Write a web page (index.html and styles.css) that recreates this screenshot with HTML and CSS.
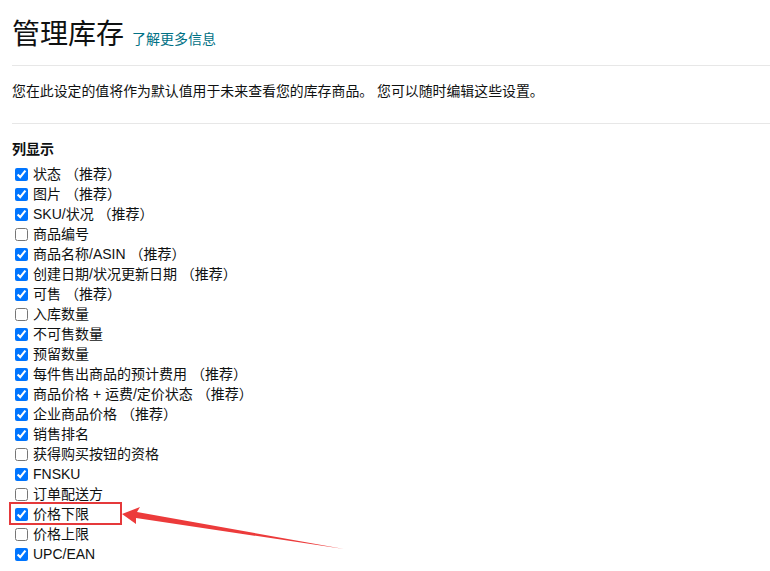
FILE: index.html
```html
<!DOCTYPE html>
<html>
  <head>
    <title>管理库存</title>
    <link rel="stylesheet" href="styles.css">
  </head>
  <body>
    <div class="page">
      <div class="page-header">
        <h1>管理库存</h1>
        <a class="learn-more" href="#">了解更多信息</a>
      </div>
      <hr class="divider">
      <p class="intro">您在此设定的值将作为默认值用于未来查看您的库存商品。 您可以随时编辑这些设置。</p>
      <hr class="divider divider-low">
      <div class="section-title">列显示</div>
      <div class="column-list">
        <label class="col-option"><input type="checkbox" checked><span>状态 （推荐）</span></label>
        <label class="col-option"><input type="checkbox" checked><span>图片 （推荐）</span></label>
        <label class="col-option"><input type="checkbox" checked><span>SKU/状况 （推荐）</span></label>
        <label class="col-option"><input type="checkbox"><span>商品编号</span></label>
        <label class="col-option"><input type="checkbox" checked><span>商品名称/ASIN （推荐）</span></label>
        <label class="col-option"><input type="checkbox" checked><span>创建日期/状况更新日期 （推荐）</span></label>
        <label class="col-option"><input type="checkbox" checked><span>可售 （推荐）</span></label>
        <label class="col-option"><input type="checkbox"><span>入库数量</span></label>
        <label class="col-option"><input type="checkbox" checked><span>不可售数量</span></label>
        <label class="col-option"><input type="checkbox" checked><span>预留数量</span></label>
        <label class="col-option"><input type="checkbox" checked><span>每件售出商品的预计费用 （推荐）</span></label>
        <label class="col-option"><input type="checkbox" checked><span>商品价格 + 运费/定价状态 （推荐）</span></label>
        <label class="col-option"><input type="checkbox" checked><span>企业商品价格 （推荐）</span></label>
        <label class="col-option"><input type="checkbox" checked><span>销售排名</span></label>
        <label class="col-option"><input type="checkbox"><span>获得购买按钮的资格</span></label>
        <label class="col-option"><input type="checkbox" checked><span>FNSKU</span></label>
        <label class="col-option"><input type="checkbox"><span>订单配送方</span></label>
        <label class="col-option highlighted"><input type="checkbox" checked><span>价格下限</span><span class="mark-box"></span><svg class="mark-arrow" width="240" height="56" viewBox="0 0 240 56"><polygon points="4,14 22,7 19,12 226,49 18,18 18,24" fill="#ec3b3b"/></svg></label>
        <label class="col-option"><input type="checkbox"><span>价格上限</span></label>
        <label class="col-option"><input type="checkbox" checked><span>UPC/EAN</span></label>
      </div>
    </div>
  </body>
</html>
```

FILE: styles.css
```css
html,
body {
  margin: 0;
  padding: 0;
  background: #fff;
}
body {
  font-family: "Liberation Sans", Arial, "Noto Sans CJK SC", sans-serif;
  color: #0f1111;
  font-size: 14px;
  overflow: hidden;
}
.page {
  padding: 18px 0 0 12px;
}
.page-header {
  display: flex;
  align-items: baseline;
  gap: 8px;
}
h1 {
  margin: 0;
  font-size: 28px;
  line-height: 34px;
  font-weight: 400;
  color: #0f1111;
}
.learn-more {
  font-size: 14px;
  color: #007185;
  text-decoration: none;
}
.divider {
  border: none;
  border-top: 1px solid #e7e7e7;
  margin: 13px 0 0 0;
}
.divider-low {
  margin-top: 22px;
}
.intro {
  margin: 15px 0 0 0;
  line-height: 20px;
  font-size: 13.9px;
}
.section-title {
  margin-top: 15px;
  font-weight: 700;
  line-height: 20px;
}
.column-list {
  margin-top: 5px;
  display: flex;
  flex-direction: column;
}
.col-option {
  display: flex;
  align-items: center;
  height: 20px;
  line-height: 20px;
  white-space: pre;
}
.col-option input {
  width: 13px;
  height: 13px;
  margin: 0 5px 0 3px;
}
.highlighted {
  position: relative;
}
.mark-box {
  position: absolute;
  left: -3px;
  top: -2px;
  width: 109px;
  height: 19px;
  border: 2px solid #e5393b;
}
.mark-arrow {
  position: absolute;
  left: 106px;
  top: -4px;
}
```
